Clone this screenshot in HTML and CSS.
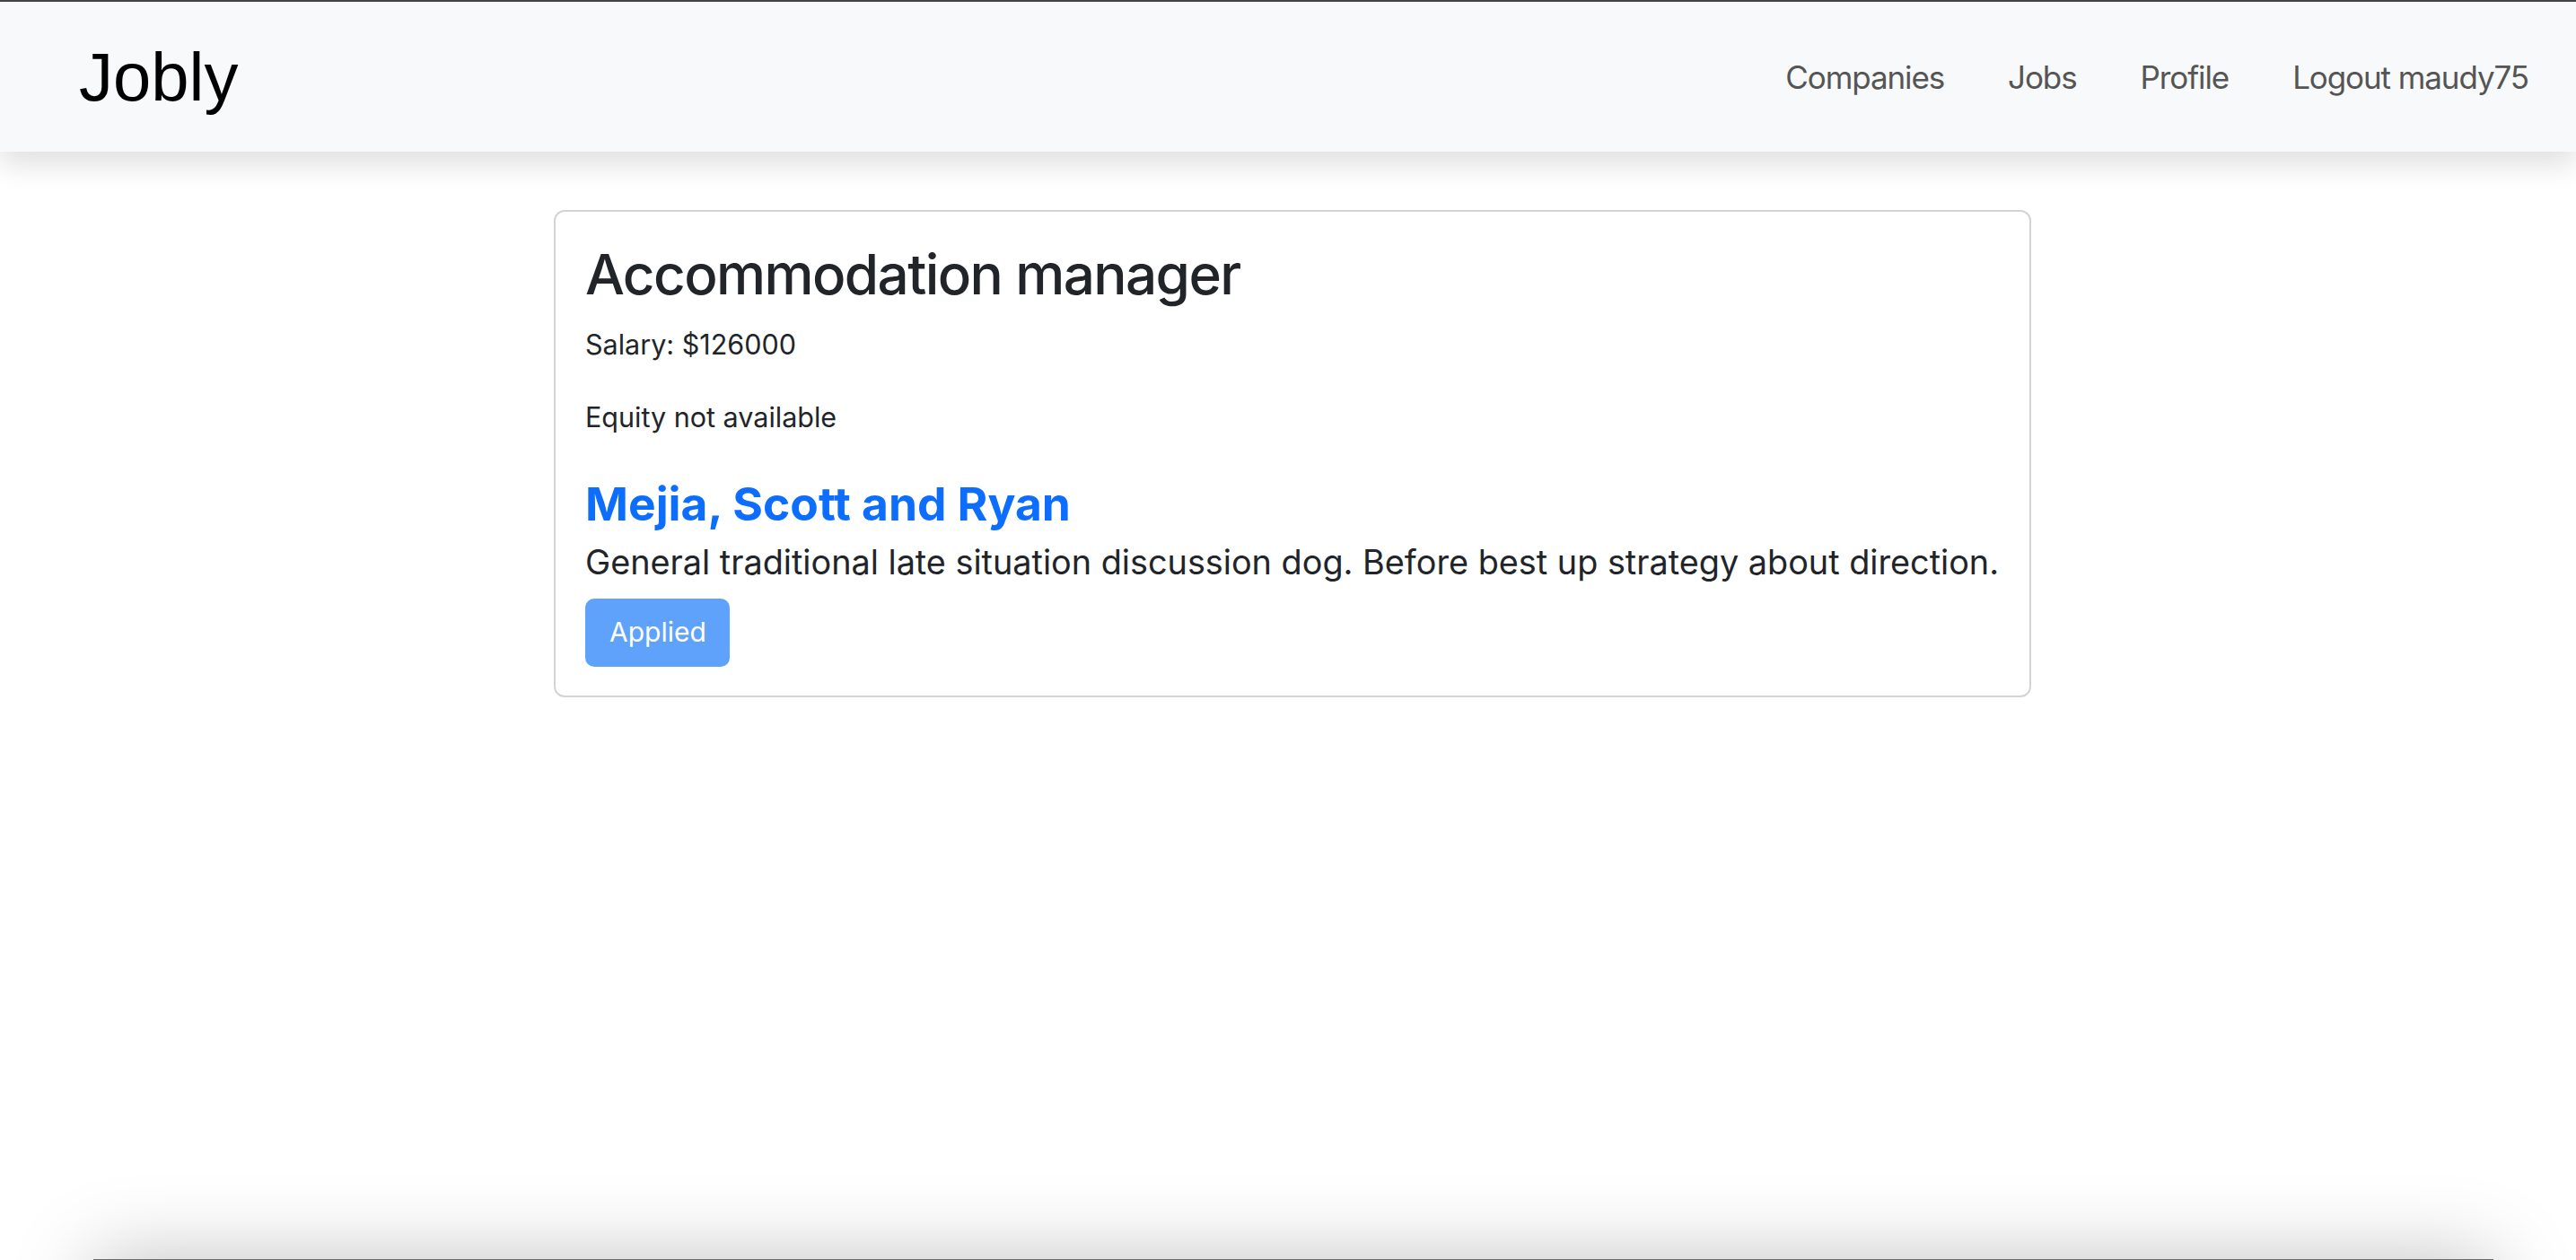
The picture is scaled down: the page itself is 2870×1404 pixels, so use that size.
FILE: index.html
```html
<!DOCTYPE html>
<html lang="en">
<head>
<meta charset="utf-8">
<title>Jobly</title>
<link rel="stylesheet" href="styles.css">
</head>
<body>
<nav class="navbar">
  <a class="brand" href="#">Jobly</a>
  <ul class="nav-links">
    <li><a href="#">Companies</a></li>
    <li><a href="#">Jobs</a></li>
    <li><a href="#">Profile</a></li>
    <li><a href="#">Logout maudy75</a></li>
  </ul>
</nav>
<main class="main">
  <section class="card">
    <h2 class="job-title">Accommodation manager</h2>
    <p class="job-detail">Salary: $126000</p>
    <p class="job-detail">Equity not available</p>
    <h3 class="company-name">Mejia, Scott and Ryan</h3>
    <p class="company-desc">General traditional late situation discussion dog. Before best up strategy about direction.</p>
    <button class="btn-applied" disabled>Applied</button>
  </section>
</main>
<div class="window-shadow"></div>
</body>
</html>
```

FILE: styles.css
```css
html, body {
  margin: 0;
  padding: 0;
}
body {
  height: 1404px;
  overflow: hidden;
  box-sizing: border-box;
  border-top: 2px solid #444;
  background: #fff;
  font-family: Inter, "Noto Sans", sans-serif;
  color: #212529;
}
.navbar {
  height: 167px;
  background: #f8f9fa;
  display: flex;
  align-items: center;
  justify-content: space-between;
  padding: 0 53px 0 88px;
  box-shadow: 0 15px 29px rgba(0, 0, 0, 0.12);
  position: relative;
  z-index: 1;
}
.brand {
  font-family: "Liberation Sans", Arial, sans-serif;
  font-size: 76px;
  color: #000;
  text-decoration: none;
  line-height: 1;
}
.nav-links {
  list-style: none;
  display: flex;
  gap: 71px;
  margin: 0;
  padding: 0;
}
.nav-links a {
  font-size: 35px;
  color: #555;
  text-decoration: none;
  letter-spacing: -1.1px;
}
.main {
  display: flex;
  justify-content: center;
  padding: 65px 0 0 10px;
}
.card {
  width: 1646px;
  box-sizing: border-box;
  border: 2px solid #d4d4d4;
  border-radius: 12px;
  padding: 33px 30px 32px 33px;
}
.job-title {
  font-size: 62px;
  font-weight: 500;
  line-height: 1.2;
  margin: 0 0 18px;
  letter-spacing: -1.6px;
}
.job-detail {
  font-size: 30.5px;
  line-height: 1.5;
  margin: 0 0 35px;
}
.company-name {
  font-size: 51.5px;
  font-weight: 700;
  color: #0d6efd;
  line-height: 1.2;
  margin: 43px 0 0;
}
.company-desc {
  font-size: 37.8px;
  line-height: 1.5;
  white-space: nowrap;
  margin: 5px 0 13px;
}
.btn-applied {
  font-family: Inter, "Noto Sans", sans-serif;
  font-size: 30px;
  line-height: 1.5;
  color: #fff;
  background: #5fa2fb;
  border: 0;
  border-radius: 10px;
  padding: 15px 26px 16px 27px;
}
.window-shadow {
  position: fixed;
  left: 104px;
  width: 2674px;
  top: 1403px;
  height: 200px;
  background: #6a6a6a;
  box-shadow: 0 0 90px rgba(0, 0, 0, 0.25);
}
```
